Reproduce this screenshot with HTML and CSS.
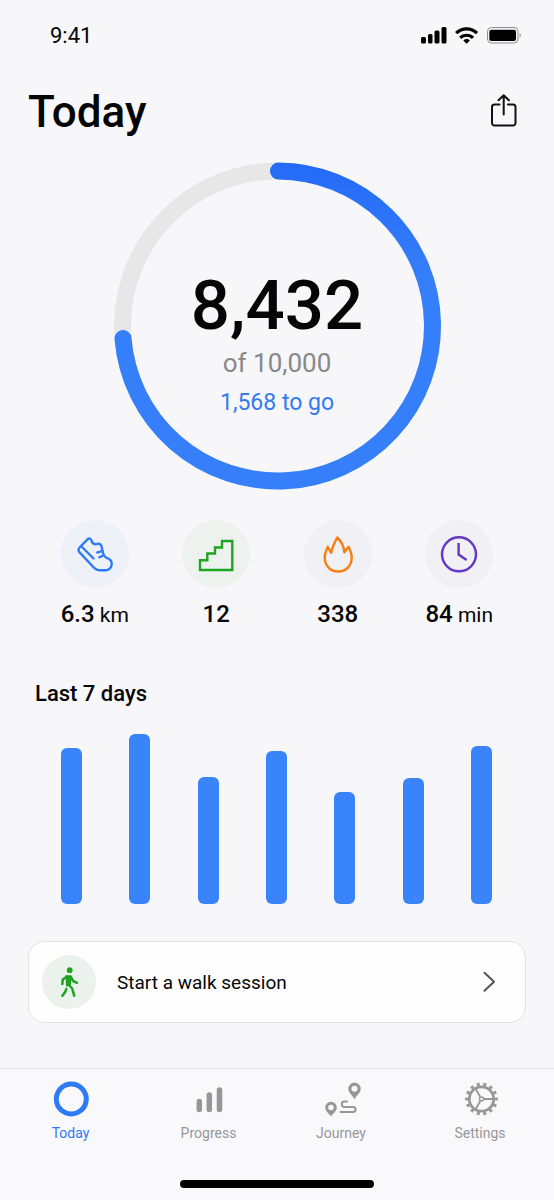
FILE: index.html
```html
<!DOCTYPE html>
<html lang="en">
<head>
<meta charset="utf-8">
<meta name="viewport" content="width=device-width, initial-scale=1">
<title>Today</title>
<link rel="stylesheet" href="styles.css">
</head>
<body>
<div class="app">
  <div class="status-bar">
    <span class="status-time">9:41</span>
    <svg class="status-icons" width="104" height="20" viewBox="418 25 104 20" aria-hidden="true">
      <rect x="421" y="37" width="5" height="6.500" rx="1.500"/>
      <rect x="428" y="34" width="4.500" height="9.500" rx="1.500"/>
      <rect x="434.500" y="30.500" width="5" height="13" rx="1.500"/>
      <rect x="441.500" y="27" width="5" height="16.500" rx="1.500"/>
      <g fill="none" stroke="#000" stroke-width="3.200">
        <path d="M456.200 33.200a14.500 14.500 0 0 1 20.800 0"/>
        <path d="M460.200 37.900a9 9 0 0 1 12.800 0"/>
      </g>
      <path d="M466.600 43.700l-3.300-3.300q3.300-2.800 6.600 0z"/>
      <rect x="487.500" y="27.500" width="30.500" height="15.500" rx="4" fill="none" stroke="#8d8d90"/>
      <rect x="489.300" y="29.700" width="26.700" height="11.200" rx="2.200"/>
      <path d="M519.700 33.200q2 2 0 4.400z" fill="#77777a"/>
    </svg>
  </div>

  <main class="content">
    <header class="header">
      <h1 class="title">Today</h1>
      <button class="share" type="button" aria-label="Share">
        <svg width="28" height="36" viewBox="490 94 28 36" aria-hidden="true">
          <path d="M499.500 104.600h-5a2.500 2.500 0 0 0-2.500 2.500v16a2.500 2.500 0 0 0 2.500 2.500h18.500a2.500 2.500 0 0 0 2.500-2.500v-16a2.500 2.500 0 0 0-2.500-2.500h-5M503.700 114.500V95.800M498.500 100.300l5.200-5 5.200 5"/>
        </svg>
      </button>
    </header>

    <section class="goal" aria-label="Daily step goal">
      <svg class="ring" viewBox="0 0 328 328" aria-hidden="true">
        <defs>
          <linearGradient id="ring-blue" x1="0" y1="0" x2="0" y2="1">
            <stop offset="0" stop-color="#246cf7"/>
            <stop offset="0.350" stop-color="#357ffb"/>
            <stop offset="1" stop-color="#357ffb"/>
          </linearGradient>
        </defs>
        <circle class="ring-track" cx="164.500" cy="164" r="155"/>
        <path class="ring-value" d="M165.500 9A155 155 0 1 1 10 176.500"/>
      </svg>
      <div class="goal-text">
        <strong class="goal-steps">8,432</strong>
        <span class="goal-total">of 10,000</span>
        <span class="goal-left">1,568 to go</span>
      </div>
    </section>

    <ul class="stats">
      <li class="stat">
        <span class="stat-icon stat-blue">
          <svg width="40" height="40" viewBox="75 534 40 40" aria-hidden="true">
            <path d="M80 547l7.500-7.700c1.500-1.400 3.400-.9 3.900 1 .6 2.600 2.200 4.300 4.900 3.800 2.400-.7 4.600-.3 5.200 2.200l1.700 7.500c.6 2.400 1.800 3.400 4 4.300 3.100 1.200 4.700 3 4.500 5.800-.2 3.400-2.200 6.200-5.500 6.300h-7.200c-1.800 0-3.200-.7-4.500-2l-14.700-15.600c-1.700-1.900-1.700-3.800.2-5.600z"/>
            <path d="M81.500 546.500l12 12M97.300 552.500l4.700-1.300M99.500 557.200l4.200-1.700"/>
          </svg>
        </span>
        <span class="stat-value"><b>6.3</b> km</span>
      </li>
      <li class="stat">
        <span class="stat-icon stat-green">
          <svg width="40" height="40" viewBox="196 534 40 40" aria-hidden="true">
            <path class="mitre" d="M200 570v-9.800h7.300v-6.700h7.700v-6h7v-6.500h10.300v29z"/>
          </svg>
        </span>
        <span class="stat-value"><b>12</b></span>
      </li>
      <li class="stat">
        <span class="stat-icon stat-orange">
          <svg width="40" height="40" viewBox="317 534 40 40" aria-hidden="true">
            <path d="M336.200 537.500c-2.200 4.900-5 9.300-6 15.300l-3.500-6c-1 3.300-3 6.100-3 10.400 0 8.600 5.800 14.300 13.500 14.300s13.500-5.700 13.500-14.300c0-4.300-2-7.100-3-10.400l-4.300 5.500c-.6-5.500-3.500-11.400-7.200-14.800z"/>
          </svg>
        </span>
        <span class="stat-value"><b>338</b></span>
      </li>
      <li class="stat">
        <span class="stat-icon stat-purple">
          <svg width="40" height="40" viewBox="440 534 40 40" aria-hidden="true">
            <circle cx="460" cy="554.300" r="17"/>
            <path class="mitre" d="M459.600 543v11.500l8 5.500"/>
          </svg>
        </span>
        <span class="stat-value"><b>84</b> min</span>
      </li>
    </ul>

    <section class="week">
      <h2 class="week-title">Last 7 days</h2>
      <div class="chart" role="img" aria-label="Steps over the last 7 days">
        <span class="bar" style="height:92%"></span>
        <span class="bar" style="height:100%"></span>
        <span class="bar" style="height:75%"></span>
        <span class="bar" style="height:90%"></span>
        <span class="bar" style="height:66%"></span>
        <span class="bar" style="height:74%"></span>
        <span class="bar" style="height:93%"></span>
      </div>
    </section>

    <button class="walk" type="button">
      <span class="walk-icon">
        <svg width="24" height="32" viewBox="57 966 24 32" aria-hidden="true">
          <circle cx="69.700" cy="970.200" r="2.900"/>
          <path d="M67.500 983.500l4.700 5 2 7.200M67 976.500l-4.200 3-.5 4.500M70.500 976.500l2.700 4.500 3.800 1.800M66.300 989l-1 2.800-2.900 3.900"/>
          <path class="torso" d="M65.500 975.300h5l1.200 2.200-.9 8.500-4.800.5z"/>
        </svg>
      </span>
      <span class="walk-label">Start a walk session</span>
      <svg class="chevron" width="16" height="24" viewBox="480 971 16 24" aria-hidden="true">
        <path d="M483.500 973.800l9.500 9-9.500 9"/>
      </svg>
    </button>
  </main>

  <footer class="footer">
    <nav class="tabs">
      <a class="tab tab-active" href="#today" aria-current="page">
        <svg width="40" height="36" viewBox="51 1081 40 36" aria-hidden="true">
          <circle cx="71.300" cy="1099" r="15" fill="none" stroke="currentColor" stroke-width="5"/>
        </svg>
        <span>Today</span>
      </a>
      <a class="tab" href="#progress">
        <svg width="40" height="36" viewBox="189 1081 40 36" aria-hidden="true">
          <path d="M199.300 1101.500v8M209.300 1095v14.500M219.500 1090v19.500" fill="none" stroke="currentColor" stroke-width="5.500" stroke-linecap="round"/>
        </svg>
        <span>Progress</span>
      </a>
      <a class="tab" href="#journey">
        <svg width="40" height="36" viewBox="321 1081 40 36" aria-hidden="true">
          <path fill="currentColor" fill-rule="evenodd" d="M354.500 1099.500c-1.500-3.700-6.200-6.300-6.200-10.700a6.200 6.200 0 0 1 12.400 0c0 4.400-4.700 7-6.200 10.700zM354.500 1091.800a3 3 0 1 0 0-6 3 3 0 0 0 0 6zM331 1116.500c-1.500-3-5.800-5-5.800-9a5.800 5.800 0 0 1 11.600 0c0 4-4.300 6-5.800 9zM331 1110.300a2.800 2.800 0 1 0 0-5.600 2.800 2.800 0 0 0 0 5.600z"/>
          <path d="M347 1101.500h-2.500a2.700 2.700 0 0 0 0 5.400h8.500a2.600 2.600 0 0 1 0 5.200h-12.500" fill="none" stroke="currentColor" stroke-width="2" stroke-linecap="round"/>
        </svg>
        <span>Journey</span>
      </a>
      <a class="tab" href="#settings">
        <svg width="40" height="36" viewBox="-21.500 -18 40 36" aria-hidden="true">
          <g fill="none" stroke="currentColor">
            <circle r="12.200" stroke-width="2.800"/>
            <circle r="14.700" stroke-width="3.400" pathLength="56" stroke-dasharray="1.800 2.200" stroke-dashoffset="0.900"/>
            <path d="M2.500 0h9.500M-1.300 2.200l-4.800 8.300M-1.300-2.200l-4.800-8.300" stroke-width="1.900"/>
            <circle r="2" stroke-width="1.500"/>
          </g>
        </svg>
        <span>Settings</span>
      </a>
    </nav>
    <div class="home-indicator"></div>
  </footer>
</div>
</body>
</html>
```
FILE: styles.css
```css
* {
  box-sizing: border-box;
}

body {
  margin: 0;
  background: #f7f7f9;
  color: #050505;
  font-family: Roboto, "Liberation Sans", sans-serif;
}

button {
  padding: 0;
  border: 0;
  background: none;
  color: inherit;
  font: inherit;
  cursor: pointer;
}

svg {
  display: block;
  flex: none;
}

.app {
  display: flex;
  flex-direction: column;
  min-height: 100vh;
}

.status-bar {
  display: flex;
  align-items: center;
  justify-content: space-between;
  height: 70px;
  padding: 0 32px 0 50px;
}

.status-time {
  font-size: 22px;
}

.content {
  display: flex;
  flex-direction: column;
  padding: 0 28px;
}

.header {
  display: flex;
  align-items: center;
  justify-content: space-between;
  height: 84px;
  padding-right: 8px;
}

.title {
  margin: 0;
  font-size: 44px;
  font-weight: 500;
}

.share svg {
  fill: none;
  stroke: #111;
  stroke-width: 2;
  stroke-linecap: round;
  stroke-linejoin: round;
}

.goal {
  display: grid;
  place-items: center;
  margin-top: 8px;
}

.ring,
.goal-text {
  grid-area: 1 / 1;
}

.ring {
  width: 328px;
}

.ring-track,
.ring-value {
  fill: none;
  stroke-width: 17;
}

.ring-track {
  stroke: #e7e7e8;
}

.ring-value {
  stroke: url(#ring-blue);
  stroke-linecap: round;
}

.goal-text {
  display: flex;
  flex-direction: column;
  align-items: center;
  padding-top: 40px;
}

.goal-steps {
  font-size: 69px;
  font-weight: 500;
  line-height: 74px;
}

.goal-total {
  color: #88888a;
  font-size: 26px;
  line-height: 40px;
}

.goal-left {
  color: #347bf0;
  font-size: 23px;
  line-height: 40px;
}

.stats {
  display: grid;
  grid-template-columns: repeat(4, 1fr);
  margin: 30px 0 0;
  padding: 0 6px;
  list-style: none;
}

.stat {
  display: flex;
  flex-direction: column;
  align-items: center;
  gap: 12px;
}

.stat-icon {
  display: grid;
  place-items: center;
  width: 68px;
  height: 68px;
  border-radius: 50%;
  background: #f0f0f5;
}

.stat-icon svg {
  fill: none;
  stroke: currentColor;
  stroke-width: 2.4;
  stroke-linecap: round;
  stroke-linejoin: round;
}

.stat-icon .mitre {
  stroke-linecap: butt;
  stroke-linejoin: miter;
}

.stat-blue {
  background: #eff1f8;
  color: #2f7df6;
}

.stat-green {
  background: #eef2ef;
  color: #1ea51f;
}

.stat-orange {
  color: #f77f14;
}

.stat-purple {
  color: #6338c4;
}

.stat-value {
  font-size: 21px;
  line-height: 28px;
}

.stat-value b {
  font-size: 24px;
  font-weight: 500;
}

.week {
  margin-top: 50px;
}

.week-title {
  margin: 0;
  padding-left: 7px;
  font-size: 22px;
  font-weight: 500;
  line-height: 30px;
}

.chart {
  display: flex;
  align-items: flex-end;
  justify-content: space-between;
  height: 170px;
  margin-top: 25px;
  padding: 0 34px 0 33px;
}

.bar {
  width: 21px;
  border-radius: 6px;
  background: #3984fb;
}

.walk {
  display: flex;
  align-items: center;
  height: 82px;
  margin-top: 37px;
  padding: 0 28px 0 13px;
  border: 1px solid #e2e2e6;
  border-radius: 16px;
  background: #fefefe;
  text-align: left;
}

.walk-icon {
  display: grid;
  place-items: center;
  width: 54px;
  height: 54px;
  border-radius: 50%;
  background: #ebf2ec;
}

.walk-icon svg {
  fill: none;
  stroke: #20a322;
  stroke-width: 2.5;
  stroke-linecap: round;
  stroke-linejoin: round;
}

.walk-icon circle,
.walk-icon .torso {
  fill: #20a322;
  stroke: none;
}

.walk-label {
  flex: 1;
  padding-left: 21px;
  font-size: 19px;
}

.chevron {
  fill: none;
  stroke: #555;
  stroke-width: 2;
  stroke-linecap: round;
  stroke-linejoin: round;
}

.footer {
  margin-top: auto;
  padding-bottom: 12px;
  border-top: 1px solid #e2e2e5;
  background: #f9f9fb;
}

.tabs {
  display: grid;
  grid-template-columns: 141fr 135fr 130fr 148fr;
  padding-top: 12px;
}

.tab {
  display: flex;
  flex-direction: column;
  align-items: center;
  gap: 6px;
  color: #97979a;
  font-size: 14px;
  line-height: 20px;
  text-decoration: none;
}

.tab-active {
  color: #2f7af5;
}

.home-indicator {
  width: 35%;
  height: 8px;
  margin: 37px auto 0;
  border-radius: 4px;
  background: #000;
}
```
